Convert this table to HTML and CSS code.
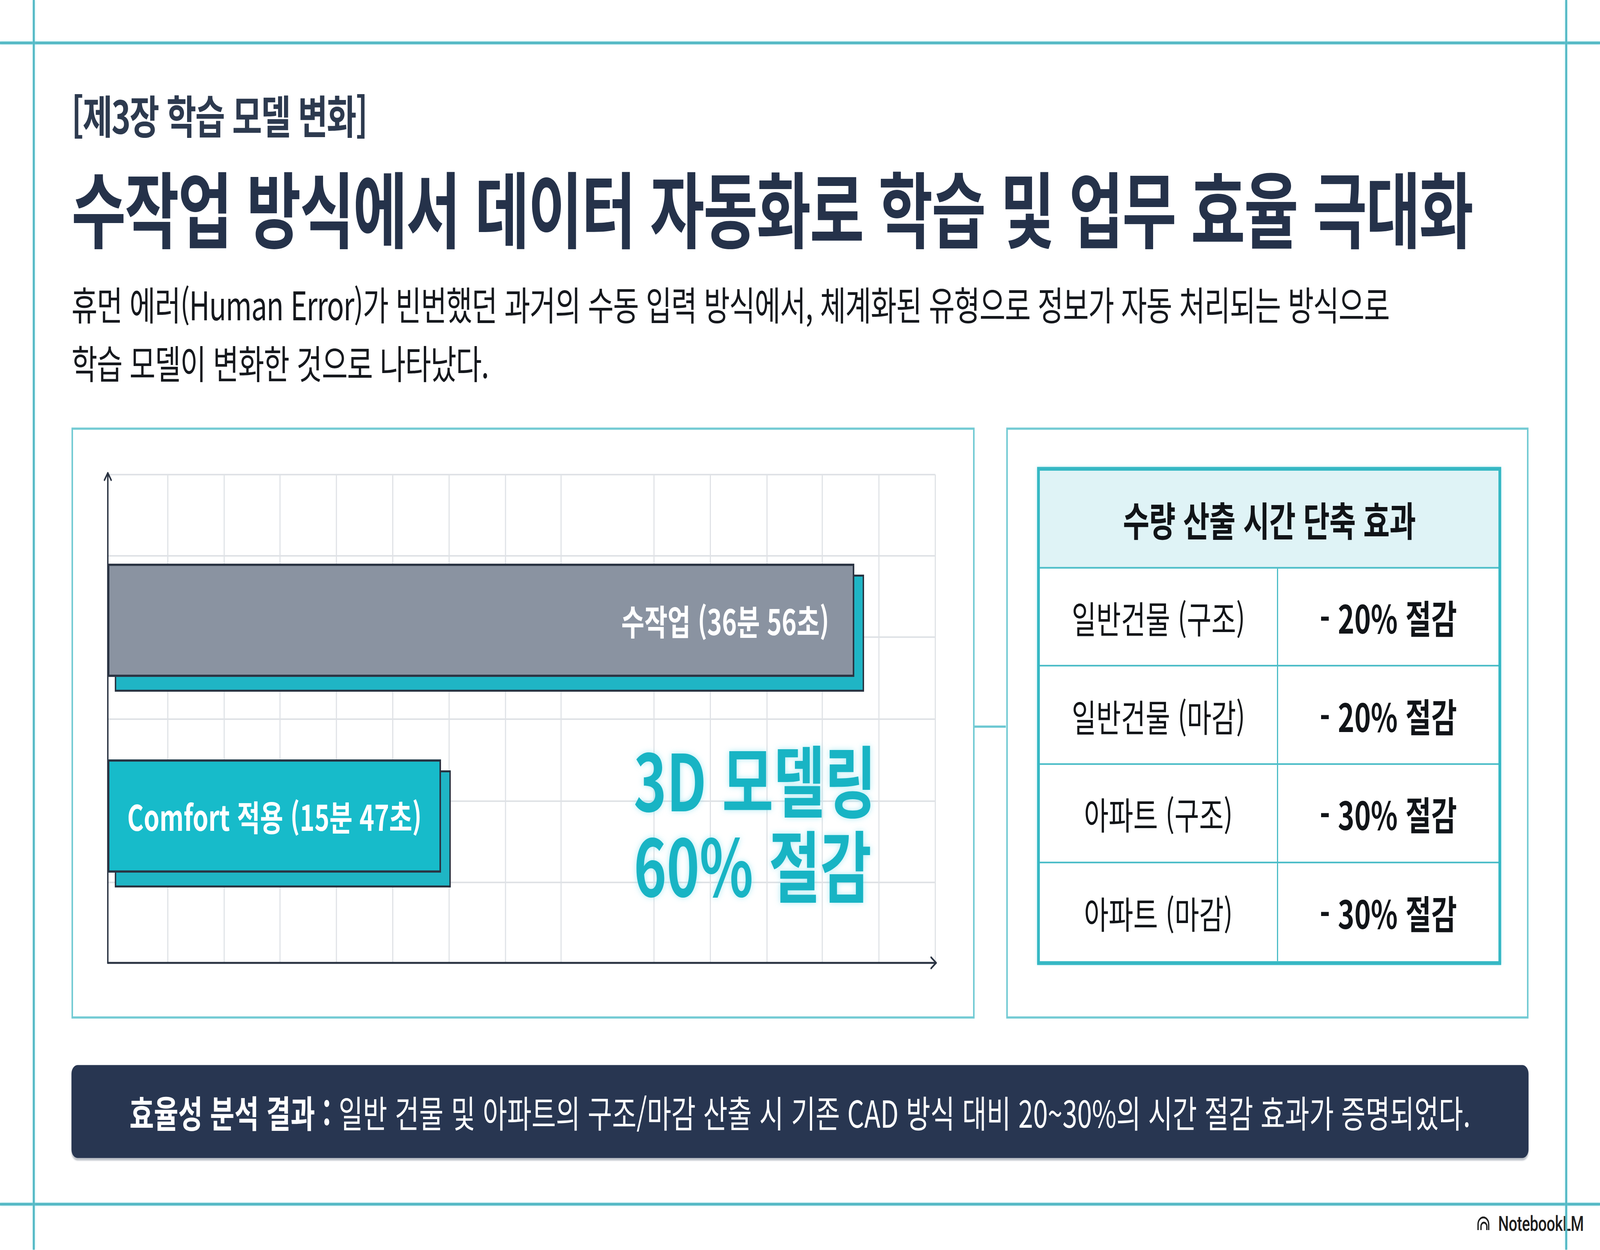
FILE: index.html
```html
<!DOCTYPE html>
<html lang="ko">
<head>
<meta charset="utf-8">
<title>제3장 학습 모델 변화</title>
<link rel="stylesheet" href="styles.css">
</head>
<body>
<div class="page">
  <main class="content">
    <header class="head">
      <div class="chapter">[제3장 학습 모델 변화]</div>
      <h1 class="title">수작업 방식에서 데이터 자동화로 학습 및 업무 효율 극대화</h1>
      <p class="lead">휴먼 에러(Human Error)가 빈번했던 과거의 수동 입력 방식에서, 체계화된 유형으로 정보가 자동 처리되는 방식으로<br>학습 모델이 변화한 것으로 나타났다.</p>
    </header>

    <section class="panels">
      <div class="panel chart-panel">
        <div class="plot">
          <svg class="grid" viewBox="0 0 2965 1250" aria-hidden="true">
            <g stroke="#dfe2e6" stroke-width="4" fill="none">
              <path d="M0 0H2965M0 208H2965M0 416H2965M0 626H2965M0 836H2965M0 1044H2965"/>
              <path d="M215 0V1250M417 0V1250M617 0V1250M819 0V1250M1021 0V1250M1223 0V1250M1425 0V1250M1624 0V1250M1957 0V1250M2159 0V1250M2362 0V1250M2560 0V1250M2763 0V1250M2965 0V1250"/>
            </g>
            <g stroke="#2a3342" stroke-width="5" fill="none" stroke-linecap="round" stroke-linejoin="round">
              <path d="M0 1250V-4"/>
              <path d="M-12 14L0 -4L12 14"/>
              <path d="M0 1250H2968"/>
              <path d="M2950 1236L2968 1250L2950 1264"/>
            </g>
          </svg>
          <div class="bar bar-manual"><span class="bar-label">수작업 (36분 56초)</span></div>
          <div class="bar-row">
            <div class="bar bar-comfort"><span class="bar-label">Comfort 적용 (15분 47초)</span></div>
            <div class="big">3D 모델링<br>60% 절감</div>
          </div>
        </div>
      </div>

      <div class="panel table-panel">
        <div class="effect">
          <div class="effect-head">수량 산출 시간 단축 효과</div>
          <div class="cell name">일반건물 (구조)</div>
          <div class="cell val">- 20% 절감</div>
          <div class="cell name">일반건물 (마감)</div>
          <div class="cell val">- 20% 절감</div>
          <div class="cell name">아파트 (구조)</div>
          <div class="cell val">- 30% 절감</div>
          <div class="cell name last">아파트 (마감)</div>
          <div class="cell val last">- 30% 절감</div>
        </div>
      </div>
    </section>

    <div class="summary"><b>효율성 분석 결과 :</b>&nbsp;일반 건물 및 아파트의 구조/마감 산출 시 기존 CAD 방식 대비 20~30%의 시간 절감 효과가 증명되었다.</div>
  </main>

  <div class="logo">
    <svg class="logo-icon" viewBox="0 0 48 40" aria-hidden="true">
      <g fill="none" stroke="#1e1e1e" stroke-width="5" stroke-linecap="butt">
        <path d="M4 38V22A20 18 0 0 1 44 22V38"/>
        <path d="M15 38V28A11 10 0 0 1 37 28V38"/>
      </g>
    </svg>
    <span class="logo-text">NotebookLM</span>
  </div>

  <div class="frame-line h top"></div>
  <div class="frame-line h bottom"></div>
  <div class="frame-line v left"></div>
  <div class="frame-line v right"></div>
</div>
</body>
</html>
```

FILE: styles.css
```css
/* 1rem = 100 design pixels of the 5733 x 3200 slide, scaled to the viewport width */
html {
  font-size: calc(100vw / 57.33);
}

* {
  box-sizing: border-box;
  margin: 0;
  padding: 0;
}

html,
body {
  width: 100vw;
  height: 100vh;
  overflow: hidden;
  background: #ffffff;
}

body {
  font-family: "Noto Sans CJK KR", "Noto Sans", sans-serif;
  color: #161a20;
}

/* the slide fills the window; when the window is not 5733:3200 it is
   stretched vertically (ratio = window aspect / slide aspect) */
.page {
  position: relative;
  width: 57.33rem;
  height: 32rem;
  background: #ffffff;
  overflow: hidden;
  transform-origin: 0 0;
  transform: scaleY(calc(tan(atan2(100vh, 100vw)) * 1.7915625));
}

.content {
  width: 54.77rem;
  padding: 2.27rem 0 0 2.56rem;
}

/* ---------- heading ---------- */
.chapter {
  font-size: 1.16rem;
  line-height: 1.3rem;
  font-weight: 700;
  color: #2d3a4f;
  letter-spacing: -0.03em;
  white-space: nowrap;
}

.title {
  margin-top: 0.55rem;
  font-size: 2.12rem;
  line-height: 2.3rem;
  font-weight: 700;
  color: #25324a;
  letter-spacing: -0.02em;
  white-space: nowrap;
}

.lead {
  margin-top: 0.59rem;
  font-size: 1.01rem;
  line-height: 1.5rem;
  font-weight: 400;
  color: #15181d;
  letter-spacing: -0.02em;
  white-space: nowrap;
}

/* ---------- panels ---------- */
.panels {
  margin-top: 0.94rem;
  display: flex;
  gap: 1.13rem;
  height: 15.12rem;
}

.panel {
  height: 15.12rem;
  border: 0.06rem solid #74cbd4;
  background: #ffffff;
}

.chart-panel {
  width: 32.36rem;
  padding: 1.15rem 0 0 1.25rem;
}

.plot {
  position: relative;
  display: flow-root;
  width: 29.65rem;
  height: 12.5rem;
  isolation: isolate;
}

.grid {
  position: absolute;
  left: 0;
  top: 0;
  width: 29.65rem;
  height: 12.5rem;
  overflow: visible;
}

.bar {
  position: relative;
  height: 2.9rem;
  border: 0.06rem solid #2a3342;
  display: flex;
  align-items: center;
  box-shadow: 0.3rem 0.33rem 0 0 #1fb5c5, 0.3rem 0.33rem 0 0.05rem #27313f;
}

.bar-manual {
  margin-top: 2.27rem;
  width: 26.74rem;
  background: #8a93a1;
  justify-content: flex-end;
  padding-right: 0.84rem;
}

.bar-row {
  display: flex;
  align-items: flex-start;
  margin-top: 2.11rem;
}

.bar-comfort {
  width: 11.94rem;
  flex: none;
  background: #17bbca;
  justify-content: center;
}

.bar-label {
  color: #ffffff;
  font-size: 0.9rem;
  line-height: 1;
  font-weight: 700;
  white-space: nowrap;
}

.big {
  position: relative;
  margin-left: 6.9rem;
  margin-top: -0.62rem;
  font-size: 2rem;
  line-height: 2.18rem;
  font-weight: 700;
  color: #18b4c4;
  white-space: nowrap;
  text-shadow: 0 0 0.18rem rgba(140, 225, 238, 0.7);
}

/* ---------- table ---------- */
.table-panel {
  position: relative;
  width: 18.72rem;
  padding: 0.95rem 0 0 1.06rem;
}

.table-panel::before {
  content: "";
  position: absolute;
  left: -1.19rem;
  top: 7.57rem;
  width: 1.13rem;
  height: 0.05rem;
  background: #6cc8d2;
}

.effect {
  width: 16.63rem;
  height: 12.75rem;
  border: 0.1rem solid #36b8c4;
  display: grid;
  grid-template-columns: 8.53rem 1fr;
  grid-template-rows: 2.5rem repeat(4, 1fr);
  box-shadow: 0 0 0.08rem rgba(120, 215, 228, 0.5);
}

.effect-head {
  grid-column: 1 / 3;
  background: #dff3f6;
  border-bottom: 0.05rem solid #4cbdc8;
  display: flex;
  align-items: center;
  justify-content: center;
  font-size: 1.03rem;
  font-weight: 700;
  color: #111418;
  letter-spacing: -0.01em;
  white-space: nowrap;
}

.cell {
  display: flex;
  align-items: center;
  justify-content: center;
  border-bottom: 0.05rem solid #4cbdc8;
  color: #111418;
  white-space: nowrap;
}

.cell.last {
  border-bottom: none;
}

.cell.name {
  border-right: 0.05rem solid #4cbdc8;
  font-size: 0.96rem;
  font-weight: 400;
}

.cell.val {
  font-size: 1rem;
  font-weight: 700;
}

/* ---------- summary ---------- */
.summary {
  margin-top: 1.2rem;
  height: 2.38rem;
  background: #283651;
  border-radius: 0.22rem;
  display: flex;
  align-items: center;
  justify-content: center;
  color: #ffffff;
  font-size: 0.95rem;
  font-weight: 400;
  white-space: nowrap;
  box-shadow: 0 0.06rem 0.04rem rgba(70, 80, 100, 0.35);
}

.summary b {
  font-weight: 700;
}

/* ---------- logo ---------- */
.logo {
  position: absolute;
  left: 52.92rem;
  top: 31.04rem;
  display: flex;
  align-items: center;
  gap: 0.3rem;
}

.logo-icon {
  display: block;
  width: 0.46rem;
  height: 0.38rem;
}

.logo-text {
  font-family: Roboto, "Liberation Sans", sans-serif;
  font-size: 0.54rem;
  line-height: 0.56rem;
  font-weight: 500;
  color: #1e1e1e;
  letter-spacing: -0.01em;
}

/* ---------- frame lines ---------- */
.frame-line {
  position: absolute;
  background: #55b9c5;
  box-shadow: 0 0 0.06rem rgba(130, 220, 232, 0.6);
}

.frame-line.h {
  left: 0;
  width: 57.33rem;
  height: 0.07rem;
}

.frame-line.v {
  top: 0;
  width: 0.07rem;
  height: 32rem;
}

.frame-line.top {
  top: 1.07rem;
}

.frame-line.bottom {
  top: 30.79rem;
}

.frame-line.left {
  left: 1.18rem;
}

.frame-line.right {
  left: 56.09rem;
}
```
